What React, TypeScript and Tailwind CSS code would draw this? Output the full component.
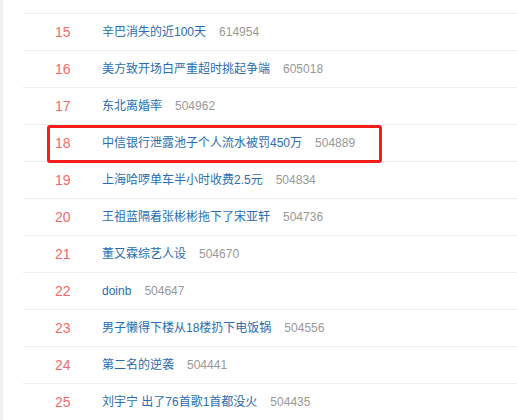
import React from 'react'

interface HotItem {
  rank: number
  title: string
  count: string
}

const items: HotItem[] = [
  { rank: 15, title: '辛巴消失的近100天', count: '614954' },
  { rank: 16, title: '美方致开场白严重超时挑起争端', count: '605018' },
  { rank: 17, title: '东北离婚率', count: '504962' },
  { rank: 18, title: '中信银行泄露池子个人流水被罚450万', count: '504889' },
  { rank: 19, title: '上海哈啰单车半小时收费2.5元', count: '504834' },
  { rank: 20, title: '王祖蓝隔着张彬彬拖下了宋亚轩', count: '504736' },
  { rank: 21, title: '董又霖综艺人设', count: '504670' },
  { rank: 22, title: 'doinb', count: '504647' },
  { rank: 23, title: '男子懒得下楼从18楼扔下电饭锅', count: '504556' },
  { rank: 24, title: '第二名的逆袭', count: '504441' },
  { rank: 25, title: '刘宇宁 出了76首歌1首都没火', count: '504435' },
]

function HotRow({ item }: { item: HotItem }) {
  return (
    <div className="flex items-center h-[37px] border-t border-[#eeeeee]">
      <span className="w-[79px] pl-[32px] text-[14px] text-[#f26b6b]">{item.rank}</span>
      <a className="text-[12px] text-[#2a6db3] whitespace-nowrap">{item.title}</a>
      <span className="ml-[13px] text-[12px] text-[#999999]">{item.count}</span>
    </div>
  )
}

export default function App() {
  return (
    <div
      className="flex w-[517px] h-[420px] overflow-hidden bg-white"
      style={{ fontFamily: '"Liberation Sans", "Noto Sans CJK SC", sans-serif' }}
    >
      <div className="w-[3px] shrink-0 bg-[#f1f1f4]" />
      <div className="relative flex-1 pl-[20px]">
        <div className="h-[13px]" />
        {items.map((item) => (
          <HotRow key={item.rank} item={item} />
        ))}
        {/* highlight box drawn over row 18 */}
        <div className="absolute left-[44px] top-[125px] w-[335px] h-[38px] border-[3px] border-[#f71b1b] rounded-[3px]" />
      </div>
    </div>
  )
}
